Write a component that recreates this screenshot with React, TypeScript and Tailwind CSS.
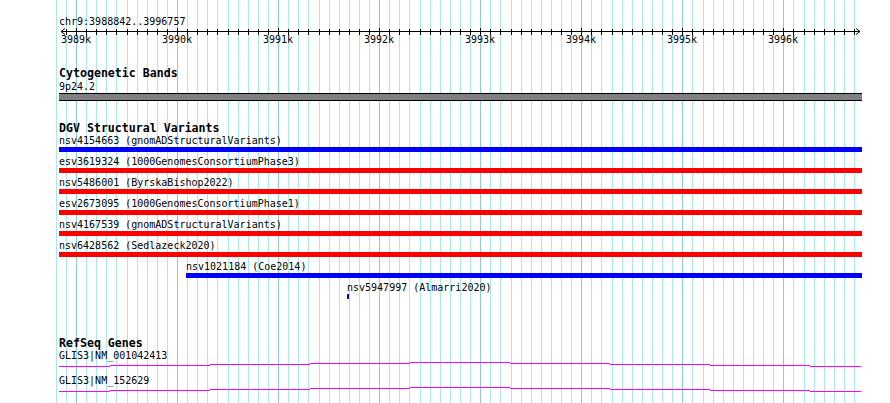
const MINOR = "#a8eaee";
const MAJOR = "#8cc8ea";

const tickX = (k: number) => 76 + k * 10.105;

const gridKs = Array.from({ length: 80 }, (_, i) => i - 2);
const rulerKs = Array.from({ length: 79 }, (_, i) => i - 1);
const majorLabels = ["3989k", "3990k", "3991k", "3992k", "3993k", "3994k", "3995k", "3996k"];

type Variant = {
  name: string;
  color: string;
  offset: string;
  width: string;
};

const variants: Variant[] = [
  { name: "nsv4154663 (gnomADStructuralVariants)", color: "bg-[#0000ff]", offset: "ml-[59px]", width: "w-[803px]" },
  { name: "esv3619324 (1000GenomesConsortiumPhase3)", color: "bg-[#ff0000]", offset: "ml-[59px]", width: "w-[803px]" },
  { name: "nsv5486001 (ByrskaBishop2022)", color: "bg-[#ff0000]", offset: "ml-[59px]", width: "w-[803px]" },
  { name: "esv2673095 (1000GenomesConsortiumPhase1)", color: "bg-[#ff0000]", offset: "ml-[59px]", width: "w-[803px]" },
  { name: "nsv4167539 (gnomADStructuralVariants)", color: "bg-[#ff0000]", offset: "ml-[59px]", width: "w-[803px]" },
  { name: "nsv6428562 (Sedlazeck2020)", color: "bg-[#ff0000]", offset: "ml-[59px]", width: "w-[803px]" },
  { name: "nsv1021184 (Coe2014)", color: "bg-[#0000ff]", offset: "ml-[186px]", width: "w-[676px]" },
  { name: "nsv5947997 (Almarri2020)", color: "bg-[#0000ff]", offset: "ml-[347px]", width: "w-[2px]" },
];

const genes = ["GLIS3|NM_001042413", "GLIS3|NM_152629"];

// stepped transcript line: y offset per 100px segment
const steps: [number, number, number][] = [
  [59, 110, 4],
  [110, 210, 3],
  [210, 310, 2],
  [310, 410, 1],
  [410, 510, 0],
  [510, 610, 1],
  [610, 710, 2],
  [710, 810, 3],
  [810, 861, 4],
];

const small = "font-['DejaVu_Sans_Mono',monospace] text-[10px] text-black whitespace-nowrap";
const title = "font-['DejaVu_Sans_Mono',monospace] text-[11.6px] font-bold leading-[12px] h-[12px] text-black whitespace-nowrap pl-[59px]";

function Grid() {
  return (
    <svg className="absolute inset-0" width={890} height={403} shapeRendering="crispEdges">
      {gridKs.map((k) => {
        const x = Math.round(tickX(k)) + 0.5;
        return (
          <line key={k} x1={x} x2={x} y1={0} y2={403} stroke={k % 10 === 0 ? MAJOR : MINOR} strokeWidth={1} />
        );
      })}
    </svg>
  );
}

function Ruler() {
  return (
    <div className="relative h-[18px] w-[890px]">
      <svg className="absolute left-0 top-0" width={890} height={9} shapeRendering="crispEdges">
        <line x1={61} x2={860} y1={3.5} y2={3.5} stroke="#000" />
        {rulerKs.map((k) => {
          const x = Math.round(tickX(k)) + 0.5;
          const major = k % 10 === 0;
          return <line key={k} x1={x} x2={x} y1={major ? 0 : 1} y2={major ? 8 : 7} stroke="#000" />;
        })}
        <polyline points="65,0.5 61,3.5 65,6.5" fill="none" stroke="#000" shapeRendering="auto" />
        <polyline points="856,0.5 860,3.5 856,6.5" fill="none" stroke="#000" shapeRendering="auto" />
      </svg>
      {majorLabels.map((label, i) => (
        <span
          key={label}
          className={`${small} absolute top-[6px] leading-[12px] w-[30px] text-center`}
          style={{ left: Math.round(tickX(i * 10)) - 15 }}
        >
          {label}
        </span>
      ))}
    </div>
  );
}

function GeneLine() {
  return (
    <svg width={890} height={9} className="block" shapeRendering="crispEdges">
      {steps.map(([x1, x2, dy], i) => (
        <line key={i} x1={x1} x2={x2} y1={1.5 + dy} y2={1.5 + dy} stroke="#ff00ff" strokeWidth={1} />
      ))}
    </svg>
  );
}

export default function App() {
  return (
    <div className="relative h-[403px] w-[890px] overflow-hidden bg-white">
      <Grid />
      <div className="relative flex flex-col pt-[16px]">
        <div className={`${small} leading-[12px] h-[12px] pl-[59px]`}>chr9:3988842..3996757</div>
        <Ruler />

        <div className={`${title} mt-[21px]`}>Cytogenetic Bands</div>
        <div className={`${small} leading-[12px] h-[12px] pl-[59px] mt-[2px]`}>9p24.2</div>
        <div className="ml-[59px] h-[8px] w-[803px] border-y border-black bg-[#808080]" />

        <div className={`${title} mt-[21px]`}>DGV Structural Variants</div>
        {variants.map((v, i) => (
          <div key={v.name} className={`${v.offset} flex flex-col ${i === 0 ? "mt-[1px]" : "mt-[4px]"}`}>
            <div className={`${small} leading-[11px] h-[11px]`}>{v.name}</div>
            <div className={`${v.color} ${v.width} mt-[1px] h-[5px]`} />
          </div>
        ))}

        <div className={`${title} mt-[38px]`}>RefSeq Genes</div>
        {genes.map((g, i) => (
          <div key={g} className={`flex flex-col ${i === 0 ? "mt-[1px]" : "mt-[5px]"}`}>
            <div className={`${small} leading-[11px] h-[11px] pl-[59px]`}>{g}</div>
            <GeneLine />
          </div>
        ))}
      </div>
    </div>
  );
}
